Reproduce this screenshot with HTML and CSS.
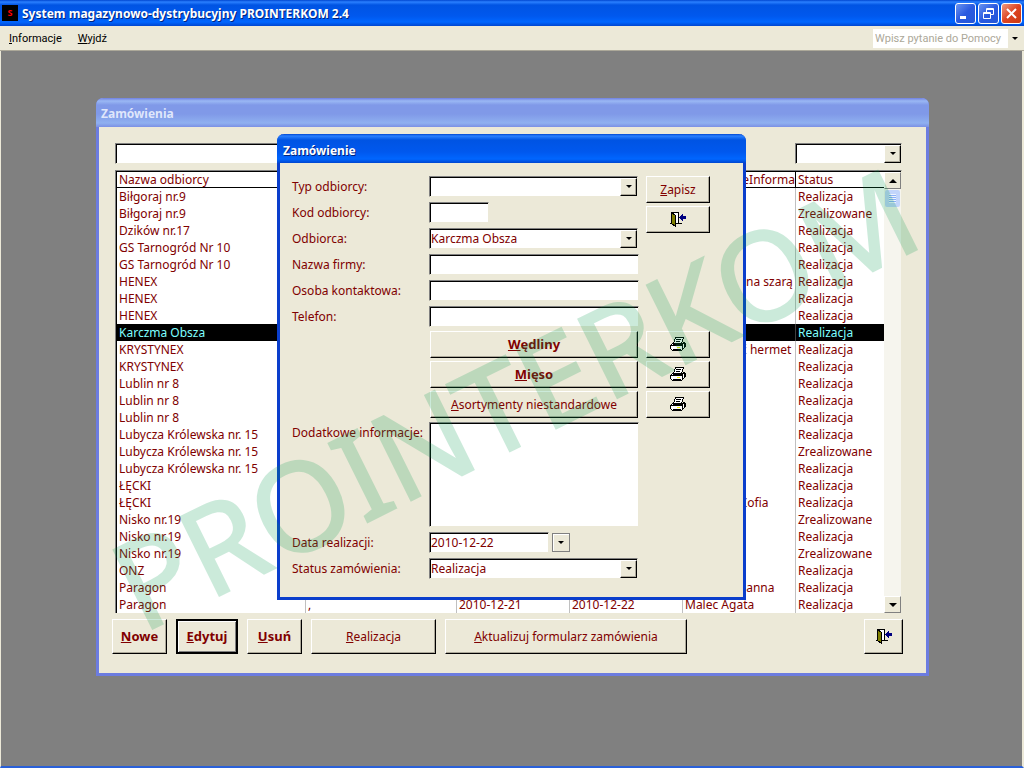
FILE: index.html
```html
<!DOCTYPE html>
<html lang="pl">
<head>
    <meta charset="UTF-8">
    <meta name="viewport" content="width=device-width, initial-scale=1.0">
    <title>System magazynowo-dystrybucyjny PROINTERKOM 2.4</title>
    <link rel="stylesheet" href="styles.css">
</head>
<body>
    <svg class="symbols" aria-hidden="true">
        <symbol id="icon-exit" viewBox="0 0 16 15">
            <path d="M1.5 .5H8.5V11.5H5" fill="#fff" stroke="#000"/>
            <path d="M1.5 .5L5.5 3.5V14.5L1.5 11.5Z" fill="#808000" stroke="#000"/>
            <path d="M8 11.5H12M0 11.5H1" stroke="#000"/>
            <path d="M9 5.5L13 2V4H16V7H13V9Z" fill="#000080"/>
        </symbol>
        <symbol id="icon-printer" viewBox="0 0 16 15">
            <path d="M5.5 .5H13.5L11.5 6.5H3.5Z" fill="#fff" stroke="#000"/>
            <path d="M6 2.5H11M6 4.5H10" stroke="#000"/>
            <path d="M3.5 5.5L.5 8.5V11.5L2.5 13.5H11.5L15.5 9.5V6.5L13.5 5.5L11.5 7.5H3" fill="#fff" stroke="#000"/>
            <path d="M.5 8.5H11.5L15 5.5M3 12.5H11M12.5 8V13M14.5 6V11" fill="none" stroke="#000"/>
            <path d="M7 10H10V11H7Z" fill="#ff0"/>
        </symbol>
    </svg>

    <header class="titlebar">
        <span class="app-icon">S</span>
        <h1>System magazynowo-dystrybucyjny PROINTERKOM 2.4</h1>
        <div class="window-buttons">
            <button type="button" aria-label="Minimalizuj"><svg viewBox="0 0 19 19"><path d="M4 12H10V15H4Z" fill="#fff"/></svg></button>
            <button type="button" aria-label="Przywróć"><svg viewBox="0 0 19 19"><path d="M7.5 8V4.5H14.5V10.5H12M7 5.5H15M4.5 8.5H11.5V14.5H4.5ZM4 9.5H12" fill="none" stroke="#fff"/></svg></button>
            <button type="button" class="close" aria-label="Zamknij"><svg viewBox="0 0 19 19"><path d="M5 5L14 14M14 5L5 14" stroke="#fff" stroke-width="2"/></svg></button>
        </div>
    </header>

    <nav class="menubar">
        <a href="#"><u>I</u>nformacje</a>
        <a href="#"><u>W</u>yjdź</a>
        <div class="help-box">
            <input type="text" placeholder="Wpisz pytanie do Pomocy" aria-label="Wpisz pytanie do Pomocy">
            <span class="arrow"></span>
        </div>
    </nav>

    <main class="desktop">
        <section class="window orders">
            <h2 class="window-title">Zamówienia</h2>
            <div class="orders-body">
                <div class="filters">
                    <input class="field" type="text" aria-label="Filtr odbiorcy">
                    <div class="combo status-filter">
                        <select aria-label="Filtr statusu"><option></option><option>Realizacja</option><option>Zrealizowane</option></select>
                        <span class="combo-button"></span>
                    </div>
                </div>

                <div class="list">
                    <table>
                        <colgroup>
                            <col class="col-name"><col class="col-person"><col class="col-date"><col class="col-date"><col class="col-date"><col>
                        </colgroup>
                        <thead>
                            <tr><th>Nazwa odbiorcy</th><th></th><th></th><th></th><th>DodatkoweInforma</th><th>Status</th></tr>
                        </thead>
                        <tbody>
                            <tr><td>Biłgoraj nr.9</td><td></td><td></td><td></td><td></td><td>Realizacja</td></tr>
                            <tr><td>Biłgoraj nr.9</td><td></td><td></td><td></td><td></td><td>Zrealizowane</td></tr>
                            <tr><td>Dzików nr.17</td><td></td><td></td><td></td><td></td><td>Realizacja</td></tr>
                            <tr><td>GS Tarnogród Nr 10</td><td></td><td></td><td></td><td></td><td>Realizacja</td></tr>
                            <tr><td>GS Tarnogród Nr 10</td><td></td><td></td><td></td><td></td><td>Realizacja</td></tr>
                            <tr><td>HENEX</td><td></td><td></td><td></td><td>pakowane na szarą</td><td>Realizacja</td></tr>
                            <tr><td>HENEX</td><td></td><td></td><td></td><td></td><td>Realizacja</td></tr>
                            <tr><td>HENEX</td><td></td><td></td><td></td><td></td><td>Realizacja</td></tr>
                            <tr class="selected"><td>Karczma Obsza</td><td></td><td></td><td></td><td></td><td>Realizacja</td></tr>
                            <tr><td>KRYSTYNEX</td><td></td><td></td><td></td><td>zapakować hermet</td><td>Realizacja</td></tr>
                            <tr><td>KRYSTYNEX</td><td></td><td></td><td></td><td></td><td>Realizacja</td></tr>
                            <tr><td>Lublin nr 8</td><td></td><td></td><td></td><td></td><td>Realizacja</td></tr>
                            <tr><td>Lublin nr 8</td><td></td><td></td><td></td><td></td><td>Realizacja</td></tr>
                            <tr><td>Lublin nr 8</td><td></td><td></td><td></td><td></td><td>Realizacja</td></tr>
                            <tr><td>Lubycza Królewska nr. 15</td><td></td><td></td><td></td><td></td><td>Realizacja</td></tr>
                            <tr><td>Lubycza Królewska nr. 15</td><td></td><td></td><td></td><td></td><td>Zrealizowane</td></tr>
                            <tr><td>Lubycza Królewska nr. 15</td><td></td><td></td><td></td><td></td><td>Realizacja</td></tr>
                            <tr><td>ŁĘCKI</td><td></td><td></td><td></td><td></td><td>Realizacja</td></tr>
                            <tr><td>ŁĘCKI</td><td></td><td></td><td></td><td>Kowalski, Zofia</td><td>Realizacja</td></tr>
                            <tr><td>Nisko nr.19</td><td></td><td></td><td></td><td></td><td>Zrealizowane</td></tr>
                            <tr><td>Nisko nr.19</td><td></td><td></td><td></td><td></td><td>Realizacja</td></tr>
                            <tr><td>Nisko nr.19</td><td></td><td></td><td></td><td></td><td>Zrealizowane</td></tr>
                            <tr><td>ONZ</td><td></td><td></td><td></td><td></td><td>Realizacja</td></tr>
                            <tr><td>Paragon</td><td></td><td></td><td></td><td>Nowacki Joanna</td><td>Realizacja</td></tr>
                            <tr><td>Paragon</td><td>,</td><td>2010-12-21</td><td>2010-12-22</td><td>Malec Agata</td><td>Realizacja</td></tr>
                        </tbody>
                    </table>
                    <div class="scrollbar">
                        <button type="button" class="up" aria-label="W górę"></button>
                        <span class="thumb"></span>
                        <button type="button" class="down" aria-label="W dół"></button>
                    </div>
                </div>

                <div class="actions">
                    <button type="button" class="btn strong"><u>N</u>owe</button>
                    <button type="button" class="btn strong default"><u>E</u>dytuj</button>
                    <button type="button" class="btn strong"><u>U</u>suń</button>
                    <button type="button" class="btn medium"><u>R</u>ealizacja</button>
                    <button type="button" class="btn wide"><u>A</u>ktualizuj formularz zamówienia</button>
                    <button type="button" class="btn exit" aria-label="Wyjście"><svg><use href="#icon-exit"/></svg></button>
                </div>
            </div>
        </section>

        <section class="window dialog">
            <h2 class="window-title">Zamówienie</h2>
            <form class="dialog-body">
                <div class="dialog-top">
                    <div class="fields">
                        <div class="row">
                            <label for="typ">Typ odbiorcy:</label>
                            <div class="combo"><select id="typ"><option></option></select><span class="combo-button"></span></div>
                        </div>
                        <div class="row">
                            <label for="kod">Kod odbiorcy:</label>
                            <input class="field short" type="text" id="kod">
                        </div>
                        <div class="row">
                            <label for="odbiorca">Odbiorca:</label>
                            <div class="combo"><select id="odbiorca"><option>Karczma Obsza</option></select><span class="combo-button"></span></div>
                        </div>
                        <div class="row">
                            <label for="firma">Nazwa firmy:</label>
                            <input class="field" type="text" id="firma">
                        </div>
                        <div class="row">
                            <label for="osoba">Osoba kontaktowa:</label>
                            <input class="field" type="text" id="osoba">
                        </div>
                        <div class="row">
                            <label for="telefon">Telefon:</label>
                            <input class="field" type="text" id="telefon">
                        </div>
                    </div>
                    <div class="side">
                        <button type="button" class="btn"><u>Z</u>apisz</button>
                        <button type="button" class="btn" aria-label="Wyjście"><svg><use href="#icon-exit"/></svg></button>
                    </div>
                </div>

                <div class="products">
                    <button type="button" class="btn strong"><u>W</u>ędliny</button>
                    <button type="button" class="btn" aria-label="Drukuj wędliny"><svg><use href="#icon-printer"/></svg></button>
                    <button type="button" class="btn strong"><u>M</u>ięso</button>
                    <button type="button" class="btn" aria-label="Drukuj mięso"><svg><use href="#icon-printer"/></svg></button>
                    <button type="button" class="btn"><u>A</u>sortymenty niestandardowe</button>
                    <button type="button" class="btn" aria-label="Drukuj asortymenty"><svg><use href="#icon-printer"/></svg></button>
                </div>

                <div class="fields">
                    <div class="row notes">
                        <label for="info">Dodatkowe informacje:</label>
                        <textarea class="field" id="info"></textarea>
                    </div>
                    <div class="row">
                        <label for="data">Data realizacji:</label>
                        <input class="field date" type="text" id="data" value="2010-12-22">
                        <button type="button" class="date-button" aria-label="Wybierz datę"><span class="arrow"></span></button>
                    </div>
                    <div class="row">
                        <label for="status">Status zamówienia:</label>
                        <div class="combo"><select id="status"><option>Realizacja</option><option>Zrealizowane</option></select><span class="combo-button"></span></div>
                    </div>
                </div>
            </form>
        </section>

        <svg class="watermark" viewBox="0 0 1024 717" aria-hidden="true">
            <text transform="translate(142 583) rotate(-26.4)">PROINTERKOM</text>
        </svg>
    </main>
</body>
</html>
```
FILE: styles.css
```css
* {
    box-sizing: border-box;
}
body {
    margin: 0;
    min-height: 100vh;
    display: flex;
    flex-direction: column;
    font-family: "Noto Sans", "DejaVu Sans", sans-serif;
    font-size: 12px;
    line-height: 17px;
    color: #800000;
    background: #ece9d8;
    overflow: hidden;
}
button, input, select, textarea {
    font: inherit;
    color: inherit;
    border-radius: 0;
}
.symbols {
    display: none;
}

/* application title bar */
.titlebar {
    display: flex;
    align-items: center;
    height: 26px;
    padding: 0 2px;
    background: linear-gradient(#0046d0, #2a80ff 2px, #0054e3 5px, #0058ee 16px, #0066ff 22px, #0046d0);
}
.titlebar h1 {
    flex: 1;
    margin: 0 0 0 4px;
    font-size: 12px;
    font-weight: 700;
    color: #fff;
    text-shadow: 1px 1px 0 #00247d;
}
.app-icon {
    width: 16px;
    height: 16px;
    background: #000;
    color: #f00;
    font-size: 9px;
    font-weight: 700;
    line-height: 15px;
    text-align: center;
}
.window-buttons {
    display: flex;
    gap: 2px;
}
.window-buttons button {
    width: 21px;
    height: 21px;
    padding: 0;
    border: 1px solid #fff;
    border-radius: 3px;
    background: linear-gradient(135deg, #6a94f0, #2a5ae0 50%, #2458d8);
}
.window-buttons .close {
    background: linear-gradient(135deg, #f09a80, #dd4422 50%, #cc3a10);
}
.window-buttons svg {
    display: block;
    width: 19px;
    height: 19px;
}

.menubar {
    display: flex;
    align-items: center;
    gap: 16px;
    height: 25px;
    padding: 0 2px 0 9px;
    font-family: Roboto, "Noto Sans", sans-serif;
    font-size: 11px;
    border-bottom: 1px solid #aca899;
}
.menubar a {
    color: #000;
    text-decoration: none;
}
.help-box {
    display: flex;
    align-items: center;
    margin-left: auto;
    width: 149px;
}
.help-box input {
    flex: 1;
    min-width: 0;
    height: 19px;
    padding: 0 2px;
    border: 0;
    background: #fff;
}
.help-box input::placeholder {
    color: #aca899;
    opacity: 1;
}
.help-box .arrow {
    margin: 0 4px;
}
.arrow {
    width: 0;
    border: 3px solid transparent;
    border-top-color: #000;
    border-bottom: 0;
}

.desktop {
    position: relative;
    flex: 1;
    border: 1px solid #ece9d8;
    border-top: 0;
    border-right-width: 2px;
    border-bottom: 2px solid #2a60d8;
    background: #808080;
}

/* windows */
.window {
    position: absolute;
    border: 3px solid #0a3ecc;
    border-top: 0;
    border-radius: 7px 7px 0 0;
    background: #ece9d8;
}
.window-title {
    height: 29px;
    margin: 0 -3px;
    padding: 0 6px;
    border-radius: 7px 7px 0 0;
    font-size: 12px;
    line-height: 32px;
    color: #fff;
    background: linear-gradient(#0046d0, #2a80ff 2px, #0054e3 6px, #0058ee 18px, #0066ff 25px, #0046d0);
    text-shadow: 1px 1px 0 #00247d;
}
.orders {
    top: 47px;
    left: 95px;
    width: 833px;
    border-color: #6c7ce0;
}
.orders .window-title {
    padding: 0 5px;
    color: #dfe6fb;
    background: linear-gradient(#7080e0, #9ab8f4 3px, #8099e8 7px, #8099e8 16px, #8fb0f0 25px, #7b90e4);
    text-shadow: none;
}
.orders-body {
    padding: 16px 24px 19px 16px;
}
.dialog {
    top: 83px;
    left: 276px;
    width: 469px;
}
.dialog .window-title {
    line-height: 34px;
}
.dialog-body {
    padding: 13px 33px 18px 12px;
}

/* inputs */
.field {
    width: 210px;
    height: 21px;
    padding: 0 1px;
    border: 1px solid;
    border-color: #808080 #ece9d8 #ece9d8 #808080;
    background: #fff;
    box-shadow: inset 1px 1px 0 #000;
    outline: 0;
}
.combo {
    position: relative;
    width: 209px;
}
.combo select {
    display: block;
    width: 100%;
    height: 21px;
    padding: 0 1px;
    appearance: none;
    border: 1px solid;
    border-color: #808080 #ece9d8 #ece9d8 #808080;
    background: #fff;
    box-shadow: inset 1px 1px 0 #000;
    outline: 0;
}
.combo-button {
    position: absolute;
    top: 2px;
    right: 1px;
    width: 17px;
    height: 18px;
    border: 1px solid;
    border-color: #fff #000 #000 #fff;
    background: #ece9d8;
    box-shadow: inset -1px -1px 0 #aca899;
    pointer-events: none;
}
.combo-button::after {
    content: "";
    display: block;
    width: 0;
    margin: 6px 0 0 5px;
    border: 3px solid transparent;
    border-top-color: #000;
    border-bottom: 0;
}

.btn {
    display: flex;
    align-items: center;
    justify-content: center;
    height: 27px;
    padding: 0;
    border: 1px solid;
    border-color: #fff #000 #000 #fff;
    background: #ece9d8;
    box-shadow: inset -1px -1px 0 #aca899;
}
.btn svg {
    width: 16px;
    height: 15px;
    shape-rendering: crispEdges;
}
.btn.strong {
    font-size: 13px;
    font-weight: 700;
}

/* orders list */
.filters {
    display: flex;
    justify-content: space-between;
    height: 21px;
    margin-bottom: 6px;
}
.filters .field {
    width: 300px;
}
.status-filter {
    width: 107px;
}
.list {
    display: flex;
    height: 443px;
    border: 1px solid;
    border-color: #808080 #ece9d8 #ece9d8 #808080;
    border-bottom: 0;
    background: #fff;
    box-shadow: inset 1px 1px 0 #000;
    padding: 1px 0 0 1px;
}
table {
    flex: 1;
    width: 0;
    table-layout: fixed;
    border-collapse: separate;
    border-spacing: 0;
}
th, td {
    height: 17px;
    padding: 0 1px 0 2px;
    border-right: 1px solid #c0c0c0;
    line-height: 16px;
    font-weight: 400;
    text-align: left;
    white-space: nowrap;
    overflow: hidden;
}
th {
    height: 16px;
    border-right-color: #000;
    border-bottom: 1px solid #000;
    line-height: 15px;
}
th:last-child, td:last-child {
    border-right: 0;
}
.selected {
    background: #000;
    color: #7fffff;
}
.selected td {
    border-right-color: #404040;
}
.col-name {
    width: 189px;
}
.col-person {
    width: 151px;
}
.col-date {
    width: 113px;
}
.scrollbar {
    display: flex;
    flex-direction: column;
    width: 17px;
    background: #f6f5ee;
}
.scrollbar button {
    display: flex;
    align-items: center;
    justify-content: center;
    height: 17px;
    padding: 0;
    border: 1px solid;
    border-color: #fff #808080 #808080 #fff;
    background: #ece9d8;
}
.scrollbar button::after {
    content: "";
    border: 4px solid transparent;
}
.scrollbar .up::after {
    border-bottom-color: #000;
    border-top: 0;
}
.scrollbar .down::after {
    border-top-color: #000;
    border-bottom: 0;
}
.scrollbar .down {
    margin-top: auto;
}
.thumb {
    height: 17px;
    margin: 1px;
    border: 4px solid #c2d5fb;
    border-radius: 2px;
    background: repeating-linear-gradient(#eef4fe 0 1px, #8cb0f8 1px 2px);
}

.actions {
    display: flex;
    gap: 9px;
    margin: 6px -1px 0 -3px;
}
.actions .btn {
    width: 55px;
    height: 35px;
}
.actions .default {
    width: 62px;
    border: 2px solid #000;
    box-shadow: inset 1px 1px 0 #fff, inset -1px -1px 0 #808080;
}
.actions .medium {
    width: 125px;
}
.actions .wide {
    width: 242px;
}
.actions .exit {
    width: 39px;
    margin-left: auto;
}

/* order form */
.dialog-top {
    display: flex;
    justify-content: space-between;
}
.fields {
    display: flex;
    flex-direction: column;
    gap: 5px;
}
.row {
    display: flex;
}
.row label {
    width: 137px;
    padding-top: 2px;
    white-space: nowrap;
}
.row .short {
    width: 60px;
}
.notes .field {
    height: 105px;
    resize: none;
}
.row .date {
    width: 120px;
}
.date-button {
    display: flex;
    align-items: center;
    justify-content: center;
    width: 18px;
    height: 19px;
    margin: 1px 0 0 3px;
    padding: 0;
    border: 1px solid #808080;
    background: #ece9d8;
    box-shadow: inset 1px 1px 0 #fff;
}
.side {
    display: flex;
    flex-direction: column;
    gap: 3px;
    width: 64px;
}
.products {
    display: grid;
    grid-template-columns: 208px 64px;
    justify-content: end;
    gap: 3px 8px;
    margin: 4px 0;
}

.watermark {
    position: absolute;
    top: 0;
    left: -1px;
    width: 1024px;
    height: 717px;
    pointer-events: none;
    opacity: 0.2;
}
.watermark text {
    font-size: 123px;
    fill: #00994d;
    stroke: #00994d;
    stroke-width: 2px;
}
```
